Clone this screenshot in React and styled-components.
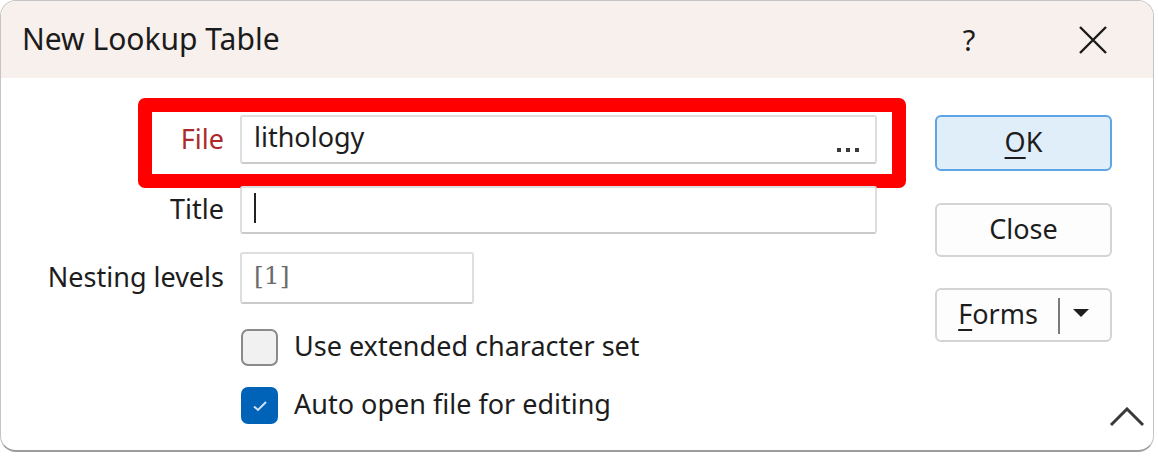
import React from 'react';
import styled, { createGlobalStyle } from 'styled-components';

const Global = createGlobalStyle`
  html, body {
    margin: 0;
    padding: 0;
    background: #ffffff;
  }
  body {
    font-family: "Noto Sans", "Open Sans", sans-serif;
  }
`

const Window = styled.div`
  width: 1154px;
  height: 452px;
  box-sizing: border-box;
  border: 1px solid #c4c4c4;
  border-bottom: 2px solid #9c9c9c;
  border-radius: 16px;
  overflow: hidden;
  background: #ffffff;
  display: flex;
  flex-direction: column;
  position: relative;
`

const TitleBar = styled.div`
  height: 77px;
  flex: none;
  background: #f8f0ec;
  display: flex;
  align-items: center;
  padding-left: 21px;
  font-size: 30px;
  color: #1b1b1b;
`

const TitleText = styled.div`
  flex: 1;
  padding-bottom: 2px;
`

const TitleButton = styled.div`
  width: 60px;
  height: 77px;
  display: flex;
  align-items: center;
  justify-content: center;
  color: #1b1b1b;
  font-size: 29px;
  margin-right: ${p => p.$mr || 0}px;
`

const Body = styled.div`
  flex: 1;
  display: flex;
  position: relative;
`

const Form = styled.div`
  width: 876px;
  display: flex;
  flex-direction: column;
  padding-top: 37px;
`

const Row = styled.div`
  display: flex;
  align-items: center;
  margin-top: ${p => p.$mt || 0}px;
  position: relative;
`

const Label = styled.div`
  width: 239px;
  padding-right: 16px;
  box-sizing: border-box;
  text-align: right;
  font-size: 27px;
  color: ${p => p.$red ? '#ad2a2c' : '#1d1d1d'};
  padding-bottom: 3px;
  white-space: nowrap;
`

const Highlight = styled.div`
  position: absolute;
  left: 137px;
  top: -17px;
  width: 768px;
  height: 90px;
  box-sizing: border-box;
  border: 14px solid #ff0000;
  border-radius: 7px;
  pointer-events: none;
`

const Field = styled.div`
  width: ${p => p.$w || 637}px;
  height: ${p => p.$h || 49}px;
  box-sizing: border-box;
  border: 2px solid #dcdee0;
  border-bottom-color: #c8cacc;
  border-radius: 3px;
  background: #ffffff;
  display: flex;
  align-items: center;
  padding: 0 16px 0 12px;
  font-size: 27px;
  color: #1d1d1d;
  position: relative;
`

const FieldText = styled.span`
  padding-bottom: 6px;
  color: ${p => p.$muted ? '#6b6b6b' : '#1d1d1d'};
  font-family: ${p => p.$serif ? '"DejaVu Serif", "Liberation Serif", serif' : 'inherit'};
  font-size: ${p => p.$serif ? '25px' : '27px'};
`

const Dots = styled.span`
  margin-left: auto;
  display: flex;
  gap: 5px;
  padding-top: 20px;
`

const Dot = styled.span`
  width: 4px;
  height: 4px;
  background: #3a3a3a;
`

const Caret = styled.div`
  width: 2px;
  height: 30px;
  background: #222;
  margin-bottom: 4px;
`

const CheckRow = styled.label`
  display: flex;
  align-items: center;
  margin-left: 240px;
  margin-top: ${p => p.$mt || 0}px;
  font-size: 27px;
  color: #1d1d1d;
`

const Box = styled.span`
  width: 37px;
  height: 37px;
  box-sizing: border-box;
  border-radius: 7px;
  border: 2px solid ${p => p.$checked ? '#0063b8' : '#8a8a8a'};
  background: ${p => p.$checked ? '#0063b8' : '#f1f1f1'};
  display: flex;
  align-items: center;
  justify-content: center;
  margin-right: 16px;
`

const CheckText = styled.span`
  padding-bottom: 4px;
`

const Buttons = styled.div`
  display: flex;
  flex-direction: column;
  padding-top: 37px;
  margin-left: 58px;
`

const Button = styled.div`
  width: 177px;
  height: ${p => p.$h || 54}px;
  box-sizing: border-box;
  border-radius: 6px;
  border: 2px solid ${p => p.$primary ? '#5fa4e4' : '#d4d4d4'};
  background: ${p => p.$primary ? '#e0eef9' : '#fdfdfd'};
  margin-top: ${p => p.$mt || 0}px;
  display: flex;
  align-items: center;
  justify-content: center;
  font-size: 27px;
  color: #1d1d1d;
  padding-bottom: 3px;
`

const U = styled.span`
  text-decoration: underline;
  text-underline-offset: 5px;
  text-decoration-thickness: 2px;
`

const SplitSep = styled.span`
  width: 2px;
  height: 36px;
  background: #7a7a7a;
  margin: 4px 13px 0 20px;
`

const Chevron = styled.div`
  position: absolute;
  right: 8px;
  bottom: 18px;
`

export default function App() {
  return (
    <>
      <Global />
      <Window>
        <TitleBar>
          <TitleText>New Lookup Table</TitleText>
          <TitleButton $mr={64}>?</TitleButton>
          <TitleButton $mr={30}>
            <svg width="30" height="30" viewBox="0 0 30 30">
              <path d="M2 2 L28 28 M28 2 L2 28" stroke="#1b1b1b" strokeWidth="2.4" fill="none" />
            </svg>
          </TitleButton>
        </TitleBar>
        <Body>
          <Form>
            <Row>
              <Highlight />
              <Label $red>File</Label>
              <Field>
                <FieldText>lithology</FieldText>
                <Dots><Dot /><Dot /><Dot /></Dots>
              </Field>
            </Row>
            <Row $mt={22}>
              <Label>Title</Label>
              <Field $h={48}>
                <Caret />
              </Field>
            </Row>
            <Row $mt={18}>
              <Label>Nesting levels</Label>
              <Field $w={234} $h={52}>
                <FieldText $muted $serif>[1]</FieldText>
              </Field>
            </Row>
            <CheckRow $mt={23}>
              <Box />
              <CheckText>Use extended character set</CheckText>
            </CheckRow>
            <CheckRow $mt={17}>
              <Box $checked>
                <svg width="16" height="12" viewBox="0 0 16 12">
                  <path d="M2 6.5 L6 10 L14 2" stroke="#cfe2f5" strokeWidth="2" fill="none" />
                </svg>
              </Box>
              <CheckText>Auto open file for editing</CheckText>
            </CheckRow>
          </Form>
          <Buttons>
            <Button $primary $h={56}><U>O</U>K</Button>
            <Button $mt={32}>Close</Button>
            <Button $mt={31}>
              <span><U>F</U>orms</span>
              <SplitSep />
              <svg width="16" height="9" viewBox="0 0 16 9">
                <path d="M0 0 L16 0 L8 8 Z" fill="#1d1d1d" />
              </svg>
            </Button>
          </Buttons>
          <Chevron>
            <svg width="36" height="20" viewBox="0 0 36 20">
              <path d="M2 18 L18 2 L34 18" stroke="#3a3a3a" strokeWidth="3" fill="none" />
            </svg>
          </Chevron>
        </Body>
      </Window>
    </>
  );
}
